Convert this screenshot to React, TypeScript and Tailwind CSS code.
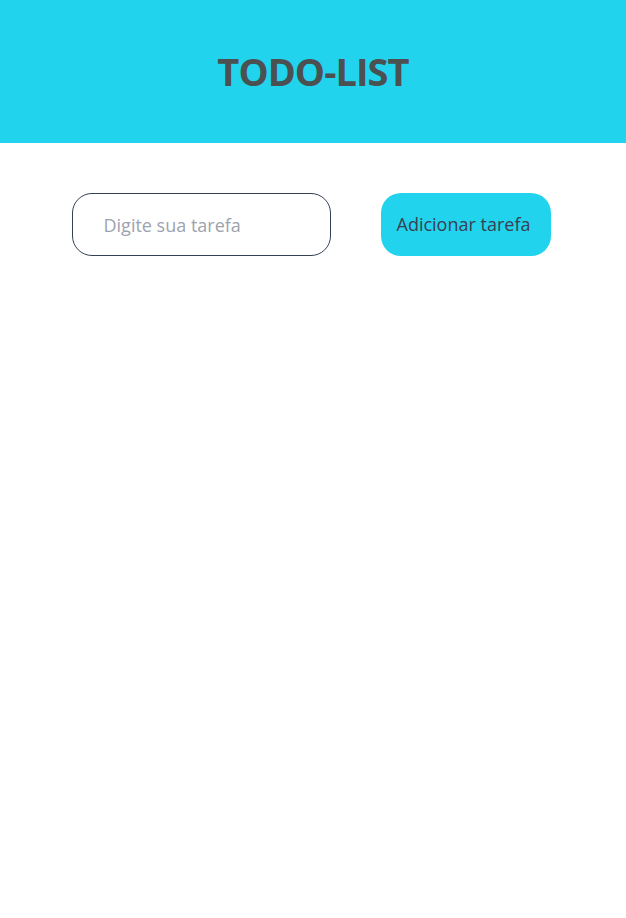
import { useState } from "react";

const App = () => {
    const [task, setTask] = useState("");

    return (
        <div className="min-h-screen bg-white" style={{ fontFamily: '"Segoe UI", "Open Sans", sans-serif' }}>
            <header className="flex h-[143px] items-center justify-center bg-[#22d3ee]">
                <h1 className="text-[38px] font-bold tracking-tight text-[#4b5050]">TODO-LIST</h1>
            </header>
            <div className="mt-[50px] flex justify-center gap-[50px] pr-[4px]">
                <input
                    value={task}
                    onChange={(e) => setTask(e.target.value)}
                    placeholder="Digite sua tarefa"
                    className="h-[63px] w-[259px] rounded-[20px] border border-[#334155] pl-[31px] text-[18px] text-gray-700 placeholder:text-[#9ca3af] outline-none"
                />
                <button className="h-[63px] w-[170px] rounded-[20px] bg-[#22d3ee] pr-[4px] text-[18px] text-[#374151]">
                    Adicionar tarefa
                </button>
            </div>
        </div>
    );
};

export default App;
